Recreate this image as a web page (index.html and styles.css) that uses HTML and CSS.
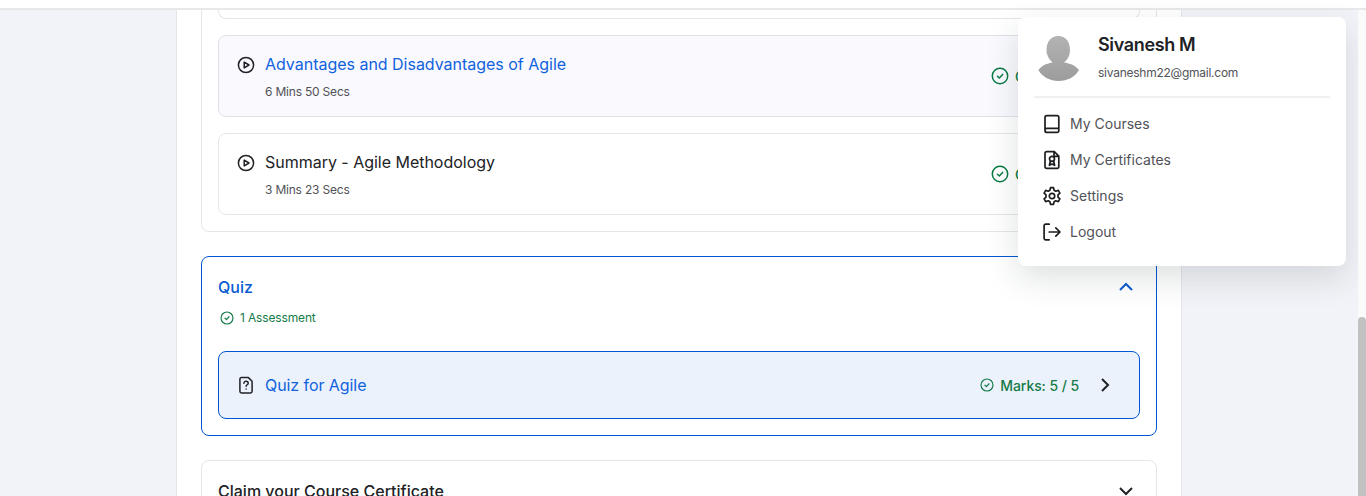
FILE: index.html
```html
<!DOCTYPE html>
<html lang="en">
<head>
<meta charset="utf-8">
<title>Course</title>
<link rel="stylesheet" href="styles.css">
</head>
<body>
<svg class="defs" width="0" height="0">
  <symbol id="play" viewBox="0 0 18 18"><circle cx="9" cy="9" r="7.6"/><path d="M7.2 6.1v5.8L12 9z"/></symbol>
  <symbol id="check" viewBox="0 0 18 18"><circle cx="9" cy="9" r="7.7"/><path d="M6.4 9.3l1.9 1.7 3.3-3.6"/></symbol>
</svg>
<header class="topbar"></header>
<main class="page">
  <div class="sheet">
    <section class="module module-lessons">
      <div class="lesson lesson-prev"></div>
      <div class="lesson lesson-active">
        <svg class="icon lesson-icon"><use href="#play"/></svg>
        <div class="lesson-text"><div class="lesson-title">Advantages and Disadvantages of Agile</div><div class="duration">6 Mins 50 Secs</div></div>
        <div class="status"><svg class="icon"><use href="#check"/></svg><span>Completed</span></div>
      </div>
      <div class="lesson">
        <svg class="icon lesson-icon"><use href="#play"/></svg>
        <div class="lesson-text"><div class="lesson-title">Summary - Agile Methodology</div><div class="duration">3 Mins 23 Secs</div></div>
        <div class="status"><svg class="icon"><use href="#check"/></svg><span>Completed</span></div>
      </div>
    </section>
    <section class="module module-quiz">
      <div class="module-head">
        <h2>Quiz</h2>
        <svg class="chevron" viewBox="0 0 16 16"><path d="M2 11l6-6 6 6"/></svg>
      </div>
      <div class="assessment"><svg class="icon-small"><use href="#check"/></svg><span>1 Assessment</span></div>
      <div class="quiz">
        <svg class="quiz-icon" viewBox="0 0 16 18"><path d="M3.400 1.600h7L14.100 5.300v10a1.600 1.600 0 0 1-1.600 1.600h-9a1.600 1.600 0 0 1-1.600-1.600V3.100a1.500 1.500 0 0 1 1.500-1.500z"/><path d="M5.900 7.200c0-2.600 4.300-2.500 4.300 0 0 1.600-2.100 1.500-2.100 3.100M8.100 12.900v.2"/></svg>
        <div class="lesson-title">Quiz for Agile</div>
        <div class="marks"><svg class="icon-small"><use href="#check"/></svg><span>Marks: 5 / 5</span></div>
        <svg class="chevron arrow" viewBox="0 0 16 16"><path d="M5 2l6 6-6 6"/></svg>
      </div>
    </section>
    <section class="module module-claim">
      <div class="module-head">
        <h2>Claim your Course Certificate</h2>
        <svg class="chevron" viewBox="0 0 16 16"><path d="M2 5l6 6 6-6"/></svg>
      </div>
    </section>
  </div>
</main>
<aside class="menu">
  <div class="profile">
    <svg class="avatar" viewBox="0 0 42 46">
      <defs><linearGradient id="grey" x1="0" y1="0" x2="0" y2="46" gradientUnits="userSpaceOnUse"><stop offset="0" stop-color="#b3b3b3"/><stop offset="1" stop-color="#9c9c9c"/></linearGradient></defs>
      <path fill="url(#grey)" d="M20.300 1C27.500 1 32 6.500 32 15C32 20 30 24.500 26 27.500C32 28.300 37.500 30.500 41 35C37 42 29.500 46 20.500 46C12 46 4.500 42 .3 35C4 30.500 9 28.300 14.800 27.500C11 24.500 8.500 20 8.500 15C8.500 6.500 13.300 1 20.300 1Z"/>
    </svg>
    <div><div class="name">Sivanesh M</div><div class="email">sivaneshm22@gmail.com</div></div>
  </div>
  <nav class="links">
    <a><svg viewBox="0 0 20 20"><path d="M4.800 1.600h10.400a1.600 1.600 0 0 1 1.600 1.600v13.600a1.600 1.600 0 0 1-1.600 1.600H5a2 2 0 0 1-2-2V3.400a1.800 1.800 0 0 1 1.800-1.800zM3 16.300a2 2 0 0 1 2-2h11.800"/></svg><span>My Courses</span></a>
    <a><svg viewBox="0 0 20 20"><path d="M4.600 1.600h7.700l4.500 4.500v10.700a1.600 1.600 0 0 1-1.600 1.600H4.600A1.600 1.600 0 0 1 3 16.800V3.200a1.600 1.600 0 0 1 1.600-1.600zM12 1.800v4.500h4.500"/><circle cx="10" cy="8.800" r="2.500"/><path d="M8.400 11L7.400 15.300l2.600-1.300 2.600 1.300-1-4.300"/></svg><span>My Certificates</span></a>
    <a><svg viewBox="0 0 20 20"><path d="M8.500 1.700h3l.6 2.500 1.700 1 2.500-.8 1.600 2.700-1.900 1.800v2.200l1.900 1.800-1.600 2.700-2.500-.8-1.700 1-.6 2.500h-3l-.6-2.500-1.700-1-2.500.8-1.600-2.700L4 11.100V8.900L2.100 7.100l1.600-2.700 2.500.8 1.700-1z"/><circle cx="10" cy="10" r="2.700"/></svg><span>Settings</span></a>
    <a><svg viewBox="0 0 20 20"><path d="M7.200 2.200H3.800a1.700 1.700 0 0 0-1.700 1.700v12.200a1.700 1.700 0 0 0 1.700 1.700h3.400M7.200 10h10.500M13.800 5.800L18 10l-4.200 4.200"/></svg><span>Logout</span></a>
  </nav>
</aside>
<div class="scroll-track"><div class="scroll-thumb"></div></div>
</body>
</html>
```

FILE: styles.css
```css
* { box-sizing: border-box; }
html, body { height: 496px; overflow: hidden; }
body { margin: 0; background: #f2f3f8; font-family: Inter, "Liberation Sans", sans-serif; color: #212225; display: flex; flex-direction: column; position: relative; }
svg { display: block; flex: none; fill: none; stroke: currentColor; stroke-width: 1.5; stroke-linecap: round; stroke-linejoin: round; }
.defs { position: absolute; }
.topbar { height: 10px; flex: none; background: #fff; border-bottom: 2px solid #e8e8ea; }
.page { flex: 1; min-height: 0; overflow: hidden; padding-left: 176px; }
.sheet { width: 1006px; height: 486px; background: #fff; border: solid #e6e6ea; border-width: 0 1px; padding: 0 24px; }
.module { border: 1px solid #e6e6e8; border-radius: 8px; padding: 0 16px; margin-bottom: 24px; }
.module-lessons { height: 222px; border-top: 0; border-radius: 0 0 8px 8px; }
.lesson { height: 82px; border: 1px solid #e6e6e8; border-radius: 8px; margin-bottom: 16px; padding: 16px 18px; display: flex; }
.lesson-prev { height: 9px; padding: 0; border-top: 0; border-radius: 0 0 8px 8px; }
.lesson-active { background: #f9f9fe; border-color: #e0e0e8; }
.lesson-active .lesson-title { color: #1162dd; }
.icon { width: 18px; height: 18px; }
.lesson-icon { margin: 4px 10px 0 0; }
.lesson-title { font-size: 16px; line-height: 24px; letter-spacing: -.02px; }
.duration { font-size: 12px; line-height: 18px; margin-top: 7px; color: #515257; letter-spacing: -.2px; }
.status { margin: -16px 14px -16px auto; width: 116px; display: flex; align-items: center; gap: 6px; color: #0a7a45; font-size: 14px; font-weight: 500; }
.module-quiz { height: 180px; border-color: #0056d2; }
.module-head { display: flex; justify-content: space-between; align-items: center; height: 24px; margin-top: 18px; padding-right: 6px; }
h2 { margin: 0; font-size: 16px; line-height: 24px; font-weight: 500; }
.module-quiz .module-head { color: #0b5bd3; }
.chevron { width: 16px; height: 16px; stroke-width: 2; stroke-linecap: butt; stroke-linejoin: miter; }
.assessment { display: flex; align-items: center; gap: 6px; margin-top: 10px; padding-left: 2px; height: 18px; font-size: 12px; letter-spacing: -.15px; color: #157b49; }
.assessment span { padding-bottom: 2px; }
.icon-small { width: 14px; height: 14px; }
.quiz { height: 68px; margin-top: 24px; border: 1px solid #0056d2; border-radius: 8px; background: #ebf2fc; display: flex; align-items: center; padding: 0 26px 0 19px; }
.quiz .lesson-title { color: #1162dd; margin-left: 11px; letter-spacing: -.07px; }
.quiz-icon { width: 16px; height: 18px; }
.marks { margin-left: auto; display: flex; align-items: center; gap: 6px; font-size: 14px; font-weight: 500; letter-spacing: -.08px; color: #157b49; }
.arrow { margin-left: 18px; }
.module-claim { height: 70px; }
.menu { position: absolute; left: 1018px; top: 17px; width: 328px; height: 249px; background: #fff; border-radius: 8px; box-shadow: 0 12px 32px rgba(32, 52, 48, .15); padding: 16px; }
.profile { height: 65px; border-bottom: 2px solid #f0f0f2; display: flex; padding-left: 4px; gap: 18px; }
.avatar { width: 42px; height: 46px; margin-top: 2px; stroke: none; }
.name { font-size: 18px; line-height: 24px; font-weight: 600; letter-spacing: -.35px; }
.email { font-size: 12px; line-height: 18px; margin-top: 7px; color: #515257; letter-spacing: -.25px; }
.links { padding: 8px; }
.links a { height: 36px; display: flex; align-items: center; gap: 8px; font-size: 14px; color: #515257; }
.links span { padding-bottom: 2px; }
.links svg { width: 20px; height: 20px; color: #1d1e20; stroke-width: 1.7; }
.scroll-track { position: absolute; top: 10px; right: 0; bottom: 0; width: 8px; background: #fafafa; padding-top: 307px; }
.scroll-thumb { height: 179px; border-radius: 4px 4px 0 0; background: #c1c1c1; }
```
